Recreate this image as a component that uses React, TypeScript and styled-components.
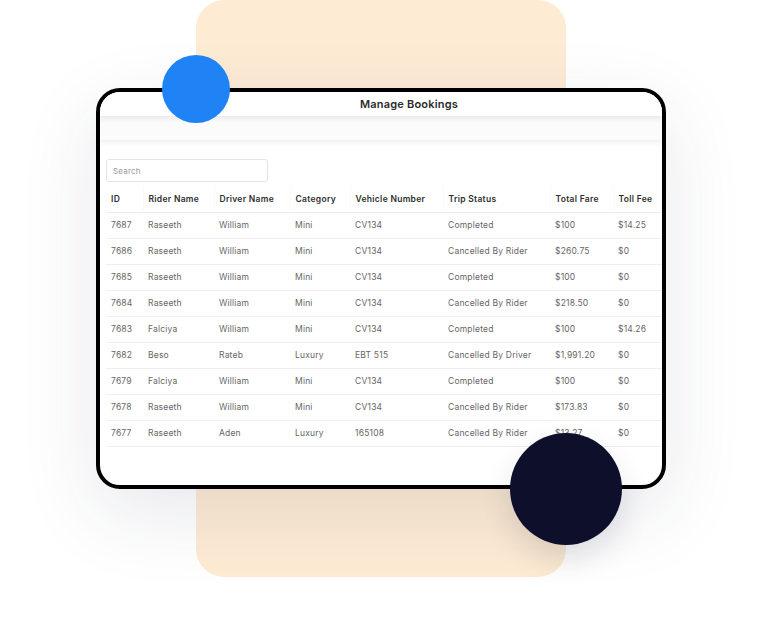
import React from "react";
import styled, { createGlobalStyle } from "styled-components";

const Global = createGlobalStyle`
  html, body { margin: 0; padding: 0; background: #ffffff; }
  body { font-family: "Inter", "Liberation Sans", sans-serif; }
  * { box-sizing: border-box; }
`;

const Stage = styled.div`
  position: relative;
  width: 762px;
  height: 641px;
  overflow: hidden;
  background: #ffffff;
  padding: 88px 0 0 96px;
`;

const PeachPanel = styled.div`
  position: absolute;
  left: 196px;
  top: 0;
  width: 370px;
  height: 577px;
  border-radius: 28px;
  background: #fdebd4;
`;

const Circle = styled.div<{ $size: number; $color: string; $x: number; $y: number }>`
  position: absolute;
  left: ${(p) => p.$x}px;
  top: ${(p) => p.$y}px;
  width: ${(p) => p.$size}px;
  height: ${(p) => p.$size}px;
  border-radius: 50%;
  background: ${(p) => p.$color};
  z-index: 3;
`;

const DarkCircle = styled(Circle)`
  box-shadow: 0 14px 30px rgba(14, 15, 42, 0.12);
`;

const Card = styled.div`
  position: relative;
  z-index: 2;
  width: 570px;
  height: 401px;
  border: 4px solid #000000;
  border-radius: 24px;
  background: #ffffff;
  overflow: hidden;
  box-shadow: 0 24px 80px rgba(40, 50, 80, 0.11);
  display: flex;
  flex-direction: column;
`;

const TitleBar = styled.div`
  height: 24px;
  display: flex;
  align-items: center;
  justify-content: center;
  padding-left: 56px;
  font-family: "Inter", sans-serif;
  font-weight: 600;
  font-size: 11px;
  letter-spacing: 0.2px;
  color: #2b2b2b;
  background: #ffffff;
  position: relative;
  z-index: 2;
  box-shadow: 0 3px 5px rgba(0, 0, 0, 0.07);
`;

const SubBar = styled.div`
  height: 24px;
  background: #fbfbfb;
  position: relative;
  z-index: 1;
  box-shadow: 0 3px 5px rgba(0, 0, 0, 0.06);
`;

const Content = styled.div`
  padding: 19px 0 0 6px;
  display: flex;
  flex-direction: column;
`;

const Search = styled.input`
  width: 162px;
  height: 23px;
  border: 1px solid #e4e4e4;
  border-radius: 3px;
  padding: 0 6px;
  font-family: "Inter", sans-serif;
  font-size: 8px;
  letter-spacing: 0.2px;
  color: #555;
  outline: none;
  &::placeholder { color: #9a9a9a; }
`;

const Table = styled.table`
  margin-top: 4px;
  border-collapse: collapse;
  table-layout: fixed;
  width: 560px;
  font-family: "Inter", sans-serif;
`;

const Th = styled.th<{ $w: number }>`
  width: ${(p) => p.$w}px;
  height: 26px;
  text-align: left;
  padding: 0 0 0 5px;
  font-size: 8.5px;
  letter-spacing: 0.3px;
  font-weight: 600;
  color: #2e2e2e;
  white-space: nowrap;
  border-bottom: 1px solid #ececec;
  border-left: 1px solid #fafafa;
  &:first-child { border-left: none; }
`;

const Td = styled.td`
  height: 26px;
  padding: 0 0 0 5px;
  font-size: 8.5px;
  letter-spacing: 0.2px;
  font-weight: 400;
  color: #666666;
  white-space: nowrap;
  border-bottom: 1px solid #efefef;
`;

const columns: [string, number][] = [
  ["ID", 37],
  ["Rider Name", 71],
  ["Driver Name", 76],
  ["Category", 60],
  ["Vehicle Number", 93],
  ["Trip Status", 107],
  ["Total Fare", 63],
  ["Toll Fee", 53],
];

const rows: string[][] = [
  ["7687", "Raseeth", "William", "Mini", "CV134", "Completed", "$100", "$14.25"],
  ["7686", "Raseeth", "William", "Mini", "CV134", "Cancelled By Rider", "$260.75", "$0"],
  ["7685", "Raseeth", "William", "Mini", "CV134", "Completed", "$100", "$0"],
  ["7684", "Raseeth", "William", "Mini", "CV134", "Cancelled By Rider", "$218.50", "$0"],
  ["7683", "Falciya", "William", "Mini", "CV134", "Completed", "$100", "$14.26"],
  ["7682", "Beso", "Rateb", "Luxury", "EBT 515", "Cancelled By Driver", "$1,991.20", "$0"],
  ["7679", "Falciya", "William", "Mini", "CV134", "Completed", "$100", "$0"],
  ["7678", "Raseeth", "William", "Mini", "CV134", "Cancelled By Rider", "$173.83", "$0"],
  ["7677", "Raseeth", "Aden", "Luxury", "165108", "Cancelled By Rider", "$13.27", "$0"],
];

export default function App() {
  return (
    <>
      <Global />
      <Stage>
        <PeachPanel />
        <Card>
          <TitleBar>Manage Bookings</TitleBar>
          <SubBar />
          <Content>
            <Search placeholder="Search" />
            <Table>
              <thead>
                <tr>
                  {columns.map(([c, w]) => (
                    <Th key={c} $w={w}>{c}</Th>
                  ))}
                </tr>
              </thead>
              <tbody>
                {rows.map((r) => (
                  <tr key={r[0]}>
                    {r.map((v, i) => (
                      <Td key={i}>{v}</Td>
                    ))}
                  </tr>
                ))}
              </tbody>
            </Table>
          </Content>
        </Card>
        <Circle $size={68} $color="#1f82f5" $x={162} $y={55} />
        <DarkCircle $size={112} $color="#0e0f2a" $x={510} $y={433} />
      </Stage>
    </>
  );
}
